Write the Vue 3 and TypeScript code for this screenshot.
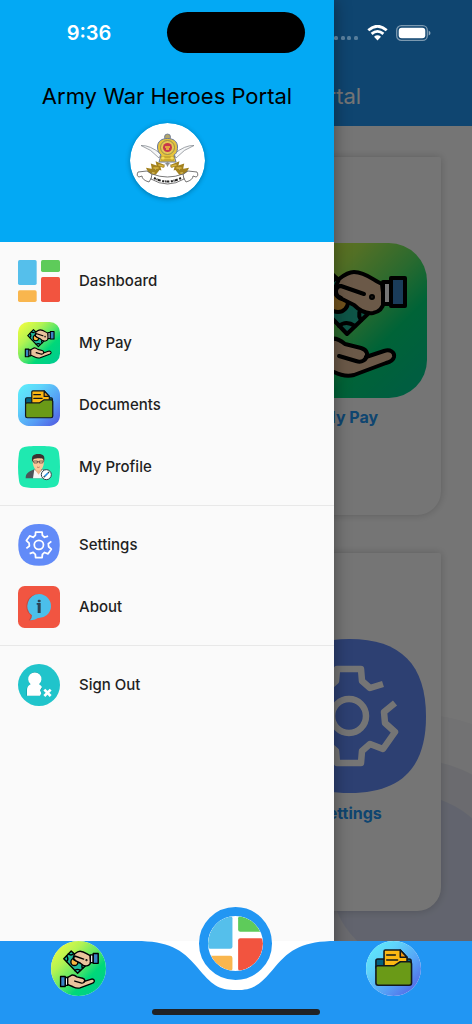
<script setup lang="ts">
interface Entry {
  label: string
  icon: string
}

const groups: Entry[][] = [
  [
    { label: 'Dashboard', icon: 'dashboard' },
    { label: 'My Pay', icon: 'pay' },
    { label: 'Documents', icon: 'documents' },
    { label: 'My Profile', icon: 'profile' },
  ],
  [
    { label: 'Settings', icon: 'settings' },
    { label: 'About', icon: 'about' },
  ],
  [{ label: 'Sign Out', icon: 'signout' }],
]

const cards: Entry[] = [
  { label: 'My Pay', icon: 'pay' },
  { label: 'Settings', icon: 'settings' },
]
</script>

<template>
  <div class="screen">
    <svg class="sheet" aria-hidden="true">
      <defs>
        <linearGradient id="pay-bg" x1="0" y1="0" x2="1" y2="1">
          <stop offset="0" stop-color="#fbff3c" />
          <stop offset="0.3" stop-color="#b4f352" />
          <stop offset="0.5" stop-color="#5fe765" />
          <stop offset="0.68" stop-color="#00d879" />
          <stop offset="1" stop-color="#00c896" />
        </linearGradient>
        <linearGradient id="doc-bg" x1="0" y1="0" x2="1" y2="1">
          <stop offset="0" stop-color="#5cf0fb" />
          <stop offset="0.3" stop-color="#5fd4fa" />
          <stop offset="0.65" stop-color="#559cf5" />
          <stop offset="1" stop-color="#5254e0" />
        </linearGradient>
      </defs>

      <symbol id="icon-dashboard" viewBox="0 0 126 126">
        <rect x="0" y="0" width="56" height="75" rx="5" fill="#55bfeb" />
        <rect x="69" y="0" width="57" height="36" rx="5" fill="#5ecb5a" />
        <rect x="69" y="51" width="57" height="75" rx="5" fill="#f2543f" />
        <rect x="0" y="91" width="56" height="35" rx="5" fill="#f9b64e" />
      </symbol>

      <symbol id="icon-pay" viewBox="0 0 155 155">
        <rect width="155" height="155" rx="38" fill="url(#pay-bg)" />
        <g stroke="#000" stroke-width="4" stroke-linejoin="round" stroke-linecap="round">
          <path d="M36 50 57 28 99 68 75 91Z" fill="#1fb99b" />
          <path d="M44 58Q51 51 44 42M49 36Q57 43 64 35M67 83Q74 77 83 83M89 77Q84 70 92 62" fill="none" />
          <circle cx="66" cy="59" r="10" fill="#f8b641" />
          <path d="M110 41C102 38 94 29 82 29C77 29 72 32 67 36L64 43C61 49 64 54 70 56L82 62C88 68 94 71 101 70C107 69 111 65 112 58Z" fill="#eac39d" />
          <path d="M68 43C62 45 63 53 69 55M69 43 92 51" fill="none" />
          <rect x="111" y="39" width="8" height="22" fill="#fff" />
          <rect x="119" y="35" width="14" height="28" fill="#3a83c4" />
          <circle cx="100" cy="54" r="1" />
          <path d="M46 103 55 98C61 93 67 96 73 101L89 105C96 107 96 113 94 114L112 108C118 106 123 109 122 114C121 118 118 119 114 120L82 132C74 134 68 132 62 129L46 122Z" fill="#eac39d" />
          <path d="M67 113 84 118C90 120 94 117 95 112" fill="none" />
          <rect x="40" y="103" width="7" height="22" fill="#fff" />
          <rect x="27" y="100" width="13" height="28" fill="#3a83c4" />
        </g>
      </symbol>

      <symbol id="icon-documents" viewBox="0 0 122 122">
        <rect width="122" height="122" rx="31" fill="url(#doc-bg)" />
        <g stroke="#12181c" stroke-width="3.5" stroke-linejoin="round" stroke-linecap="round">
          <path d="M22 60V44Q22 40 26 40H96Q100 40 100 44V60Z" fill="#04627f" />
          <path d="M40 60V23Q40 20 43 20H76L91 36V60Z" fill="#fdb813" />
          <path d="M76 20V36H91Z" fill="#f39a12" />
          <path d="M46 31H65M46 42H70" fill="none" />
          <path d="M26 55H62L76 46H96Q101 46 101 51V93Q101 98 96 98H27Q22 98 22 93V59Q22 55 26 55Z" fill="#6a9a17" />
        </g>
      </symbol>

      <symbol id="icon-profile" viewBox="0 0 126 126">
        <path d="M63 0C113 0 120 4 123 22C127 48 127 78 123 104C120 122 113 126 63 126S6 122 3 104C-1 78-1 48 3 22C6 4 13 0 63 0Z" fill="#1fe9b0" />
        <path d="M23 97C23 82 30 78 49 70H75C92 76 96 84 96 97Z" fill="#4c5459" />
        <path d="M49 70 62 82 75 70 82 97H45Z" fill="#f7f7f7" />
        <path d="M52 60H70V73L62 86 52 73Z" fill="#f2b789" />
        <path d="M44 43C44 30 78 30 78 43C78 65 70 74 61 74S44 64 44 43Z" fill="#fbc99a" />
        <path d="M43 48C39 30 46 24 61 24S82 30 78 48L75 39C68 36 54 37 47 39Z" fill="#3b3230" />
        <path d="M46 45H58V51H48ZM64 45H76L74 51H64ZM58 47H64" fill="none" stroke="#433" stroke-width="2" />
        <path d="M57 63Q61 66 65 63" fill="none" stroke="#a54" stroke-width="2" />
        <circle cx="85" cy="86" r="15" fill="#fff" stroke="#334149" stroke-width="3" />
        <path d="M80 91 90 81" stroke="#2b8fe0" stroke-width="5" />
        <path d="M77 94 80 91M90 81 93 78" stroke="#344" stroke-width="4" />
      </symbol>

      <symbol id="icon-settings" viewBox="0 0 155 155">
        <path d="M77.500 0C129 0 154 26 154 77.500S129 154 77.500 154S1 129 1 77.500S26 0 77.500 0Z" fill="#628bf8" />
        <g fill="none" stroke="#fff" stroke-width="6.500" stroke-linejoin="round">
          <circle cx="77" cy="77" r="17" />
          <path d="M31 90 42 81 41 71 31 61 43 44 56 49 64 42 65 30H89L90 42 98 49 111 45" />
          <path d="M123 64 112 73 113 84 123 93 111 110 98 105 90 112 89 124H65L64 112 56 105 43 109" />
        </g>
      </symbol>

      <symbol id="icon-about" viewBox="0 0 126 126">
        <rect width="126" height="126" rx="20" fill="#f15541" />
        <path d="M61 24C40 24 25 40 25 61C25 73 30 82 38 88Q38 97 32 103Q45 105 54 98" fill="#c94a3e" />
        <path d="M64 24A37 36 0 1 1 60 96Q49 104 36 103Q42 97 42 88A37 36 0 0 1 64 24Z" fill="#4bbfea" />
        <rect x="59" y="41" width="9" height="8" rx="3" fill="#2c4254" />
        <path d="M56 51H68V81H59V56H56Z" fill="#2c4254" />
      </symbol>

      <symbol id="icon-signout" viewBox="0 0 126 126">
        <circle cx="63" cy="63" r="63" fill="#20c4cb" />
        <path d="M25 95V78Q25 66 40 63C24 50 33 24 51 24S78 50 62 63Q71 65 73 72L67 80 71 88 66 95Z" fill="#169da5" />
        <path d="M27 95V78Q27 66 38 61A20 20 0 1 1 63 61Q69 64 72 69L66 79 70 88 66 95Z" fill="#fff" />
        <path d="M79 77 98 96M98 77 79 96" stroke="#fff" stroke-width="8" />
      </symbol>
    </svg>

    <div class="page">
      <header class="appbar">
        <span class="title">Army War Heroes Portal</span>
      </header>
      <main class="board">
        <svg class="ripples" viewBox="0 0 340 240" aria-hidden="true">
          <circle cx="283" cy="179" r="166" fill="#f8f8fa" />
          <circle cx="283" cy="179" r="120" fill="#e9eaf1" />
          <circle cx="283" cy="179" r="84" fill="#d6dbef" />
        </svg>
        <a v-for="card in cards" :key="card.label" class="card" href="#">
          <svg class="card-icon" aria-hidden="true"><use :href="'#icon-' + card.icon" /></svg>
          <span>{{ card.label }}</span>
        </a>
      </main>
    </div>

    <div class="scrim"></div>

    <aside class="drawer">
      <header class="drawer-head">
        <h1 class="title">Army War Heroes Portal</h1>
        <svg class="emblem" viewBox="0 0 75 75" role="img" aria-label="Army emblem">
          <circle cx="37.500" cy="37.500" r="37.500" fill="#fff" />
          <g fill="#f6f7f8" stroke="#777d84" stroke-width="0.700" stroke-linejoin="round">
            <path d="M11 22.500Q20 22 31 31L29 35Q21 26 11 22.500Z" />
            <path d="M64 22.500Q55 22 44 31L46 35Q54 26 64 22.500Z" />
          </g>
          <circle cx="37.500" cy="14" r="3" fill="#b2a66b" stroke="#667394" stroke-width="0.800" />
          <path d="M27.500 24C27.500 18 32 15.500 37.500 15.500S47.500 18 47.500 24C47.500 29 46 31 44 32L46 39H29L31 32C29 30 27.500 28 27.500 24Z" fill="#e5c33d" stroke="#66769e" stroke-width="1" />
          <circle cx="37.500" cy="24.500" r="7" fill="#e6c754" stroke="#88814d" stroke-width="0.800" />
          <circle cx="37.500" cy="24.500" r="4.500" fill="#c7374b" />
          <path d="M35 24H40M36 26H39" stroke="#f0c53c" stroke-width="1.400" />
          <path d="M30 34H45M31 37H44" stroke="#a88822" stroke-width="0.900" />
          <circle cx="33" cy="35" r="1.600" fill="#f4dc58" />
          <circle cx="42" cy="35" r="1.600" fill="#f4dc58" />
          <g fill="none" stroke-linecap="round">
            <path d="M33 43 28 41 29 45 23 43 24 48 19 47 21 51M29 45 25 50 20 53M42 43 47 41 46 45 52 43 51 48 56 47 54 51M46 45 50 50 55 53" stroke="#a3821f" stroke-width="3.400" />
            <path d="M33 43 29 42M28 45 24 45M24 50 21 52M42 43 46 42M47 45 51 45M51 50 54 52" stroke="#d9b53f" stroke-width="1.600" />
          </g>
          <path d="M33 42 37.500 39 42 42 39 41 37.500 44 36 41Z" fill="#8c8d8e" />
          <g fill="#fff" stroke="#555" stroke-width="0.800" stroke-linejoin="round">
            <path d="M17 48 8 49Q6 53 9 54L12 53Q12 57 19 59L23 52Z" />
            <path d="M58 48 67 49Q69 53 66 54L63 53Q63 57 56 59L52 52Z" />
            <path d="M22 51Q37.500 57 53 51L54 56Q37.500 66 21 56Z" />
          </g>
          <path d="M24 55Q37.500 62 51 55" fill="none" stroke="#222" stroke-width="2" stroke-dasharray="2 0.700 1 0.500 3 1.500" />
        </svg>
      </header>
      <nav class="menu" aria-label="Main menu">
        <ul v-for="(group, index) in groups" :key="index" class="group">
          <li v-for="item in group" :key="item.label">
            <a class="row" href="#">
              <svg class="row-icon" aria-hidden="true"><use :href="'#icon-' + item.icon" /></svg>
              <span>{{ item.label }}</span>
            </a>
          </li>
        </ul>
      </nav>
    </aside>

    <div class="status">
      <span class="time">9:36</span>
      <span class="island"></span>
      <span class="signals">
        <svg class="dots" viewBox="0 0 25 16" aria-hidden="true">
          <g fill="#fff" fill-opacity="0.300">
            <rect x="0" y="11" width="4" height="4" rx="1.500" />
            <rect x="7" y="11" width="4" height="4" rx="1.500" />
            <rect x="13" y="11" width="4" height="4" rx="1.500" />
            <rect x="20" y="11" width="4" height="4" rx="1.500" />
          </g>
        </svg>
        <svg class="wifi" viewBox="0 0 21 16" aria-hidden="true">
          <path d="M1.300 5.300Q10.500-2.800 19.700 5.300M4.600 8.900Q10.500 3.800 16.400 8.900" fill="none" stroke="#fff" stroke-width="2.800" />
          <path d="M7 11.700Q10.500 9 14 11.700L10.500 15.500Z" fill="#fff" />
        </svg>
        <svg class="battery" viewBox="0 0 35 16" aria-hidden="true">
          <rect x="0.700" y="0.700" width="30.600" height="14.600" rx="4.600" fill="none" stroke="#fff" stroke-opacity="0.450" stroke-width="1.300" />
          <rect x="2.700" y="2.700" width="26.600" height="10.600" rx="3" fill="#fff" />
          <path d="M32.700 5.500Q34.500 6.500 34.500 8T32.700 10.500Z" fill="#fff" fill-opacity="0.550" />
        </svg>
      </span>
    </div>

    <nav class="tabs" aria-label="Shortcuts">
      <div class="tabs-back" aria-hidden="true">
        <span></span>
        <svg class="notch" viewBox="0 0 200 83">
          <rect width="200" height="83" fill="#fff" />
          <path d="M0 0C32 0 46 8 61 26C76 44 82 49 100 49S124 44 139 26C154 8 168 0 200 0V83H0Z" fill="#2196f3" />
        </svg>
        <span></span>
      </div>
      <button class="tab" type="button" aria-label="My Pay">
        <svg aria-hidden="true"><use href="#icon-pay" /></svg>
      </button>
      <button class="tab current" type="button" aria-label="Dashboard">
        <svg aria-hidden="true"><use href="#icon-dashboard" /></svg>
      </button>
      <button class="tab" type="button" aria-label="Documents">
        <svg aria-hidden="true"><use href="#icon-documents" /></svg>
      </button>
      <span class="home-bar"></span>
    </nav>
  </div>
</template>

<style>
body {
  margin: 0;
  background: #fff;
}
</style>

<style scoped>
.screen {
  position: relative;
  display: flex;
  flex-direction: column;
  min-height: 100vh;
  overflow: hidden;
  font-family: Inter, "Liberation Sans", sans-serif;
  color: #1f1f1f;
}

.sheet {
  position: absolute;
  width: 0;
  height: 0;
}

.page {
  flex: 1;
  display: flex;
  flex-direction: column;
}

.appbar {
  display: flex;
  align-items: flex-end;
  justify-content: center;
  box-sizing: border-box;
  height: 126px;
  padding-bottom: 16px;
  background: #2196f3;
  color: #fff;
}

.title {
  margin: 0;
  font-size: 22px;
  line-height: 28px;
  font-weight: 400;
  white-space: nowrap;
}

.board {
  position: relative;
  flex: 1;
  display: grid;
  grid-template-columns: 1fr 1fr;
  align-content: start;
  gap: 38px 44px;
  padding: 31px 31px 30px;
}

.ripples {
  position: absolute;
  right: 0;
  bottom: 0;
  width: 340px;
  height: 240px;
}

.card {
  position: relative;
  grid-column: 2;
  display: flex;
  flex-direction: column;
  align-items: center;
  gap: 9px;
  box-sizing: border-box;
  height: 358px;
  padding-top: 86px;
  border-radius: 8px 2px 24px 8px;
  background: #fff;
  box-shadow: 0 0 8px rgba(0, 0, 0, 0.2);
  color: #2196f3;
  font-size: 16px;
  line-height: 20px;
  font-weight: 700;
  text-decoration: none;
}

.card-icon {
  width: 155px;
  height: 155px;
}

.scrim {
  position: absolute;
  inset: 0;
  background: rgba(0, 0, 0, 0.54);
}

.drawer {
  position: absolute;
  top: 0;
  bottom: 0;
  left: 0;
  width: min(334px, 85vw);
  background: #fafafa;
  box-shadow: 0 0 16px rgba(0, 0, 0, 0.4);
}

.drawer-head {
  display: flex;
  flex-direction: column;
  align-items: center;
  gap: 13px;
  box-sizing: border-box;
  height: 242px;
  padding-top: 82px;
  background: #03a9f4;
  color: #000;
}

.emblem {
  width: 75px;
  height: 75px;
  border-radius: 50%;
  box-shadow: 0 1px 5px rgba(0, 0, 0, 0.3);
}

.menu {
  padding-top: 8px;
}

.group {
  margin: 0;
  padding: 0;
  list-style: none;
}

.group + .group::before {
  content: "";
  display: block;
  height: 1px;
  margin: 7px 0 8px;
  background: #e8e8e8;
}

.row {
  display: flex;
  align-items: center;
  gap: 19px;
  height: 62px;
  padding: 0 18px;
  color: inherit;
  font-size: 15px;
  line-height: 20px;
  font-weight: 500;
  text-decoration: none;
}

.row-icon {
  width: 42px;
  height: 42px;
}

.status {
  position: absolute;
  top: 12px;
  left: 0;
  right: 0;
  display: grid;
  grid-template-columns: 1fr 138px 1fr;
  align-items: center;
  height: 41px;
  color: #fff;
}

.time {
  padding-left: 11px;
  text-align: center;
  font-size: 20px;
  line-height: 24px;
  font-weight: 600;
}

.island {
  height: 41px;
  border-radius: 21px;
  background: #000;
}

.signals {
  display: flex;
  align-items: center;
  gap: 8px;
  padding-left: 29px;
}

.dots {
  width: 25px;
  height: 16px;
}

.wifi {
  width: 21px;
  height: 16px;
}

.battery {
  width: 35px;
  height: 16px;
}

.tabs {
  position: relative;
  display: grid;
  grid-template-columns: repeat(3, 1fr);
  justify-items: center;
  height: 83px;
}

.tabs-back {
  position: absolute;
  inset: 0;
  display: flex;
}

.tabs-back span {
  flex: 1;
  background: #2196f3;
}

.notch {
  width: 200px;
  height: 83px;
}

.tab {
  position: relative;
  width: 55px;
  height: 55px;
  padding: 0;
  border: 0;
  border-radius: 50%;
  background: #fff;
  overflow: hidden;
}

.tab svg {
  display: block;
  width: 55px;
  height: 55px;
}

.current {
  box-sizing: content-box;
  margin-top: -34px;
  border: 9px solid #2196f3;
}

.current svg {
  border-radius: 50%;
}

.home-bar {
  position: absolute;
  bottom: 9px;
  left: 50%;
  width: 168px;
  height: 6px;
  margin-left: -84px;
  border-radius: 3px;
  background: #202225;
}
</style>
